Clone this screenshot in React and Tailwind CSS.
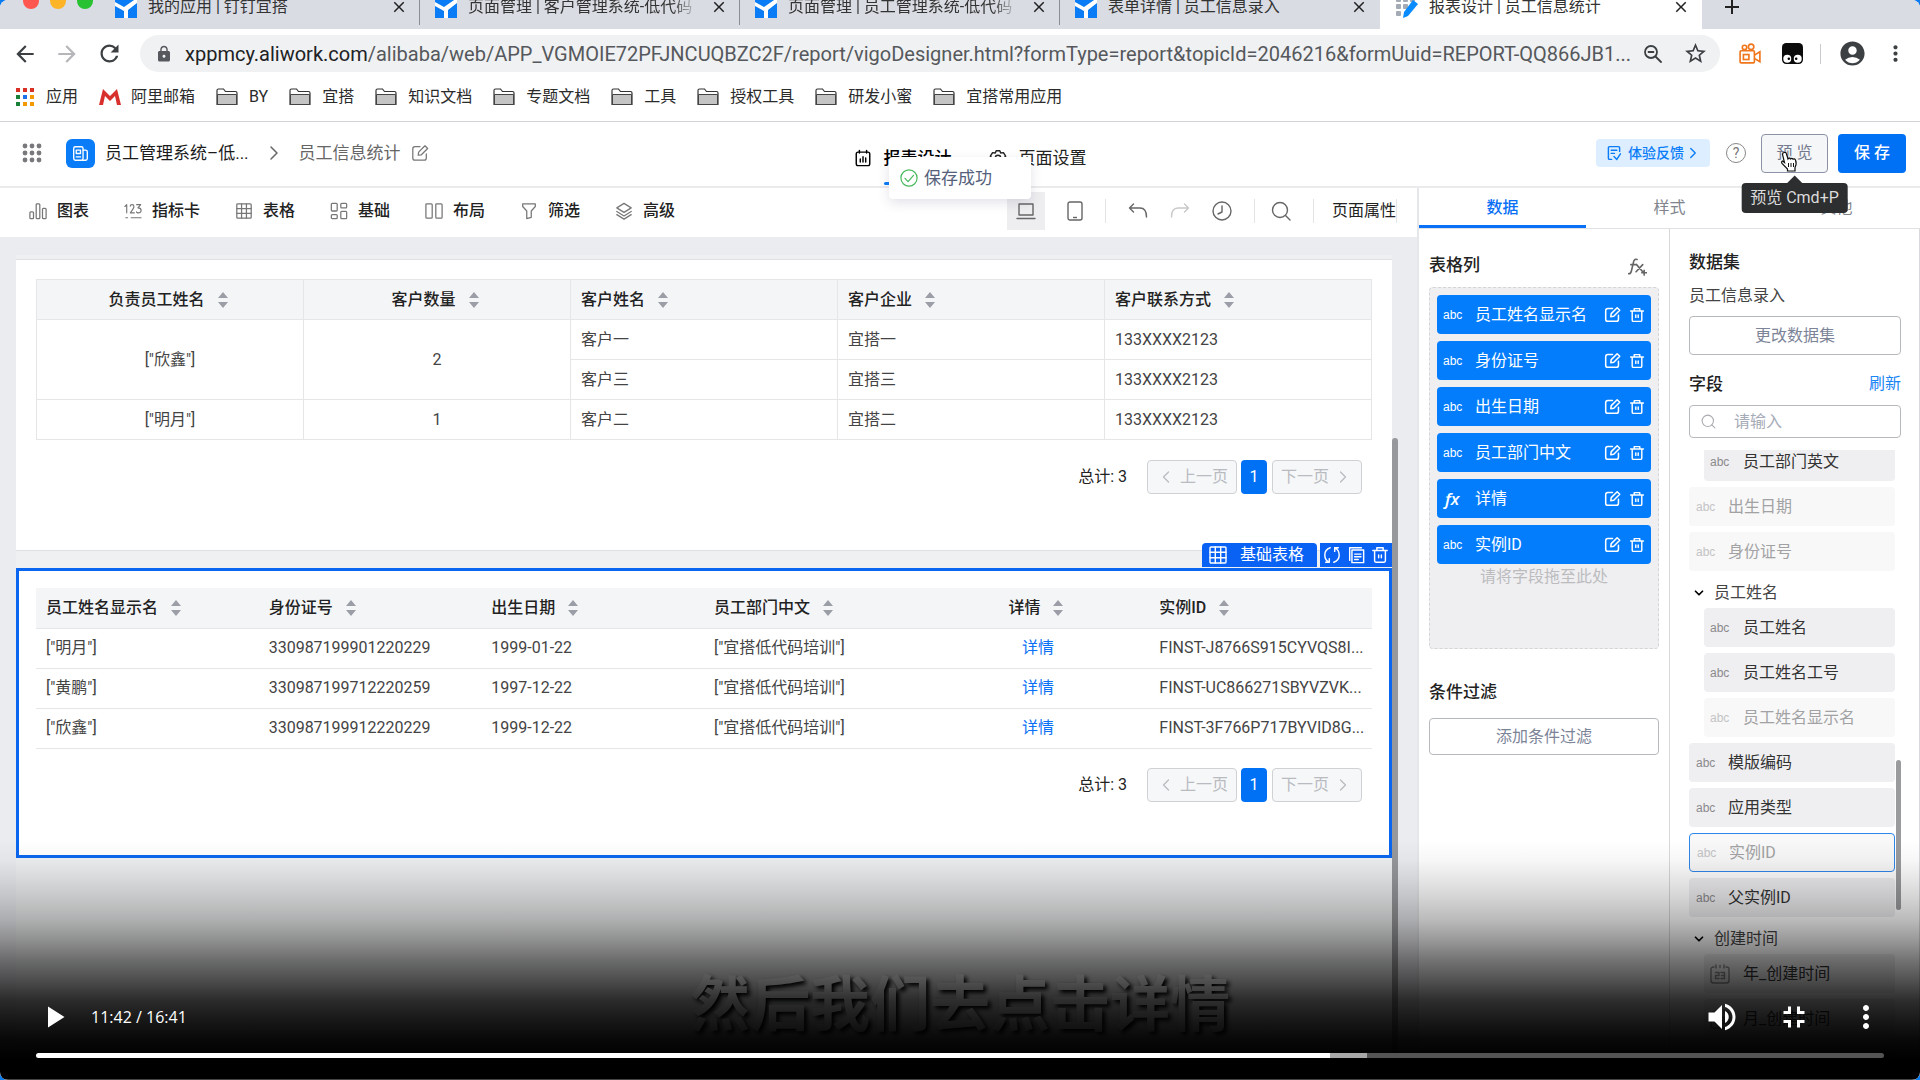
import React from 'react';
import {
  MdAccountCircle,
  MdAdd,
  MdArrowBack,
  MdArrowForward,
  MdClose,
  MdFullscreenExit,
  MdLock,
  MdMoreVert,
  MdPlayArrow,
  MdRefresh,
  MdStarBorder,
  MdVolumeUp,
} from 'react-icons/md';
import { ChevronDown, ChevronLeft, ChevronRight, Search } from 'lucide-react';

const browserTabs = [
  { title: '我的应用 | 钉钉宜搭' },
  { title: '页面管理 | 客户管理系统-低代码', fade: true },
  { title: '页面管理 | 员工管理系统-低代码', fade: true },
  { title: '表单详情 | 员工信息录入', last: true },
  { title: '报表设计 | 员工信息统计', active: true },
];

const bookmarks = ['BY', '宜搭', '知识文档', '专题文档', '工具', '授权工具', '研发小蜜', '宜搭常用应用'];

const customerRows = [
  { owner: '["欣鑫"]', count: 2, span: 2, name: '客户一', company: '宜搭一', phone: '133XXXX2123' },
  { name: '客户三', company: '宜搭三', phone: '133XXXX2123' },
  { owner: '["明月"]', count: 1, span: 1, name: '客户二', company: '宜搭二', phone: '133XXXX2123' },
];

const staffRows = [
  { name: '["明月"]', idCard: '330987199901220229', birth: '1999-01-22', dept: '["宜搭低代码培训"]', inst: 'FINST-J8766S915CYVQS8I...' },
  { name: '["黄鹏"]', idCard: '330987199712220259', birth: '1997-12-22', dept: '["宜搭低代码培训"]', inst: 'FINST-UC866271SBYVZVK...' },
  { name: '["欣鑫"]', idCard: '330987199912220229', birth: '1999-12-22', dept: '["宜搭低代码培训"]', inst: 'FINST-3F766P717BYVID8G...' },
];

const tableColumns = [
  { label: '员工姓名显示名' },
  { label: '身份证号' },
  { label: '出生日期' },
  { label: '员工部门中文' },
  { label: '详情', formula: true },
  { label: '实例ID' },
];

const fields = [
  { label: '员工部门英文', nested: true },
  { label: '出生日期', used: true },
  { label: '身份证号', used: true },
  { label: '员工姓名', group: true },
  { label: '员工姓名', nested: true },
  { label: '员工姓名工号', nested: true },
  { label: '员工姓名显示名', nested: true, used: true },
  { label: '模版编码' },
  { label: '应用类型' },
  { label: '实例ID', used: true, selected: true },
  { label: '父实例ID' },
  { label: '创建时间', group: true },
  { label: '年_创建时间', nested: true, date: true },
  { label: '月_创建时间', nested: true, date: true },
  { label: '日_创建时间', nested: true, date: true },
];

/* ---------- icons ---------- */

const Icon = ({ size = 'size-[18px]', children, w = 1.4, className = '' }) => (
  <svg
    viewBox="0 0 20 20"
    className={`${size} shrink-0 ${className}`}
    fill="none"
    stroke="currentColor"
    strokeWidth={w}
    strokeLinecap="round"
    strokeLinejoin="round"
    aria-hidden="true"
  >
    {children}
  </svg>
);

const YidaLogo = () => (
  <svg viewBox="0 0 22 22" className="size-[22px] shrink-0" aria-hidden="true">
    <path fill="#0a7cf5" d="M0 0h22v22H0z" />
    <path fill="#fff" d="M0 6l9 5 13-9v5l-9 7v8H9v-7L0 10z" />
  </svg>
);

const ReportLogo = () => (
  <svg viewBox="0 0 22 22" className="size-[22px] shrink-0" aria-hidden="true">
    <g fill="#a5abb5">
      <rect x="0" y="1" width="5" height="5" rx="1" />
      <rect x="7" y="1" width="5" height="5" rx="1" />
      <rect x="14" y="1" width="5" height="5" rx="1" />
      <rect x="0" y="8" width="5" height="5" rx="1" />
      <rect x="7" y="8" width="5" height="5" rx="1" />
      <rect x="0" y="15" width="5" height="5" rx="1" />
    </g>
    <path fill="#0a8cff" d="M17 4l5 4-10 12-5 2 1-6z" />
  </svg>
);

const FolderIcon = () => (
  <svg viewBox="0 0 22 18" className="h-[18px] w-[22px] shrink-0" aria-hidden="true">
    <path d="M1 16.5V2.5q0-1.5 1.500-1.500h5l2 2.500h10q1.500 0 1.500 1.500v11.500z" fill="#fff" stroke="#333" strokeWidth="1.200" />
    <path d="M1.500 6.500h19v10h-19z" fill="#c4c4c4" stroke="#444" strokeWidth="1" />
  </svg>
);

const AppsIcon = () => {
  const colors = ['#d93025', '#d93025', '#d93025', '#188038', '#1a73e8', '#f29900', '#188038', '#f29900', '#f29900'];
  return (
    <svg viewBox="0 0 18 18" className="size-[18px] shrink-0" aria-hidden="true">
      {colors.map((c, i) => (
        <rect key={i} x={(i % 3) * 7} y={Math.floor(i / 3) * 7} width="4" height="4" fill={c} />
      ))}
    </svg>
  );
};

const GridDots = () => (
  <svg viewBox="0 0 20 20" className="size-5 shrink-0 fill-[#77797c]" aria-hidden="true">
    {[3, 10, 17].map((y) => [3, 10, 17].map((x) => <circle key={`${x}-${y}`} cx={x} cy={y} r="2.400" />))}
  </svg>
);

const EditIcon = ({ size, w = 1.6 }) => (
  <Icon size={size} w={w}>
    <path d="M10 3H4.500A2.500 2.500 0 002 5.500v10A2.500 2.500 0 004.500 18h10a2.500 2.500 0 002.500-2.500V11" />
    <path d="M8 12.500l.5-3.500L15.500 2l3 3-7 7z" />
  </Icon>
);

const TrashIcon = ({ size, w = 1.6 }) => (
  <Icon size={size} w={w}>
    <path d="M2 5h16M6.500 5V2h7v3M4 5v11.500q0 1.500 1.500 1.500h9q1.500 0 1.500-1.500V5M8.500 10v3M11.500 10v3" />
  </Icon>
);

const TableIcon = ({ size }) => (
  <Icon size={size}>
    <rect x="2" y="2" width="16" height="16" rx="1" />
    <path d="M2 7.300h16M2 12.700h16M7.300 2v16M12.700 2v16" />
  </Icon>
);

const SortIcon = () => (
  <svg viewBox="0 0 10 16" className="h-4 w-2.5 shrink-0 fill-[#9b9ea6]" aria-hidden="true">
    <path d="M5 0l5 6H0zM5 16l5-6H0z" />
  </svg>
);

const CalendarIcon = () => (
  <Icon size="size-5" w={1.4}>
    <path d="M4 3H3.500Q1 3 1 5.500v11Q1 19 3.500 19h13q2.500 0 2.500-2.500v-11Q19 3 16.500 3H16M6 1v3M10 1.500v2M14 1v3" />
    <path d="M5.500 8.500h3.500v3H5.500v3H9M11 8.500h3.500v6H11M11.500 11.500h3" />
  </Icon>
);

const tools = [
  {
    label: '图表',
    icon: (
      <Icon>
        <rect x="1" y="11" width="4" height="7.500" rx="1" />
        <rect x="8" y="2" width="4" height="16.500" rx="1" />
        <rect x="15" y="7" width="4" height="11.500" rx="1" />
      </Icon>
    ),
  },
  {
    label: '指标卡',
    icon: (
      <Icon w={1.3}>
        <path d="M1 5l2-2v9M7 4.500q0-1.500 2-1.500t2 2-4 7h4.500M14 3h4.500l-3 3.500q3.500 0 3.500 2.700T16.500 12 14 11M2 17.500h2M8 17.500h11" />
      </Icon>
    ),
  },
  { label: '表格', icon: <TableIcon /> },
  {
    label: '基础',
    icon: (
      <Icon>
        <rect x="1.500" y="1.500" width="6.500" height="8.500" rx="1" />
        <rect x="12" y="1.500" width="6.500" height="5" rx="1" />
        <rect x="1.500" y="14" width="6.500" height="4.500" rx="1" />
        <rect x="12" y="10.500" width="6.500" height="8" rx="1" />
      </Icon>
    ),
  },
  {
    label: '布局',
    icon: (
      <Icon>
        <rect x="1" y="2" width="7" height="16" rx="1" />
        <rect x="12" y="2" width="7" height="16" rx="1" />
      </Icon>
    ),
  },
  {
    label: '筛选',
    icon: (
      <Icon>
        <path d="M3 2h14v3l-4.500 5v7l-5 1.500V10L3 5z" />
      </Icon>
    ),
  },
  {
    label: '高级',
    icon: (
      <Icon>
        <path d="M10 1.500L18 6.500 10 11.500 2 6.500zM2 10.500l8 5 8-5M2 14l8 5 8-5" />
      </Icon>
    ),
  },
];

/* ---------- browser chrome ---------- */

const TabStrip = () => (
  <div className="flex h-[29px] flex-col justify-end overflow-hidden bg-[#d9dce3]">
    <div className="flex h-11 shrink-0 items-stretch text-base text-[#333]">
      <div className="flex w-[100px] shrink-0 items-center gap-[11px] pb-3 pl-[23px]">
        <span className="size-4 rounded-full bg-[#ff5650]" />
        <span className="size-4 rounded-full bg-[#fdb427]" />
        <span className="size-4 rounded-full bg-[#28c131]" />
      </div>
      {browserTabs.map((tab) => (
        <div
          key={tab.title}
          className={
            tab.active
              ? 'flex w-[322px] items-center gap-[11px] rounded-t-lg bg-white pr-3 pl-4'
              : 'flex w-[320px] items-center gap-[11px] pl-[15px]'
          }
        >
          {tab.active ? <ReportLogo /> : <YidaLogo />}
          <span
            className={`flex-1 overflow-hidden leading-6 whitespace-nowrap ${
              tab.fade ? '[mask-image:linear-gradient(to_right,black_88%,transparent)]' : ''
            }`}
          >
            {tab.title}
          </span>
          <MdClose className="size-[18px] shrink-0 text-[#222]" />
          {!tab.active && <span className={tab.last ? 'h-9 w-px' : 'h-9 w-px bg-[#8b8e95]'} />}
        </div>
      ))}
      <button type="button" aria-label="新标签页" className="ml-[18px]">
        <MdAdd className="size-6 text-[#222]" />
      </button>
    </div>
  </div>
);

const AddressBar = () => (
  <div className="flex h-[49px] items-center bg-white px-3 text-[#3c4043]">
    <button type="button" aria-label="后退"><MdArrowBack className="size-[26px]" /></button>
    <button type="button" aria-label="前进" className="ml-4"><MdArrowForward className="size-[26px] text-[#b4b6b9]" /></button>
    <button type="button" aria-label="刷新页面" className="mr-[17px] ml-4"><MdRefresh className="size-[27px]" /></button>
    <div className="flex h-[37px] flex-1 items-center rounded-full bg-[#f0f1f2] pr-3 pl-[15px]">
      <MdLock className="size-[18px] shrink-0 text-[#55585c]" />
      <span className="ml-3 flex-1 truncate text-xl leading-6 text-[#55585c]">
        <span className="text-[#202124]">xppmcy.aliwork.com</span>
        /alibaba/web/APP_VGMOIE72PFJNCUQBZC2F/report/vigoDesigner.html?formType=report&amp;topicId=2046216&amp;formUuid=REPORT-QQ866JB1...
      </span>
      <Icon size="size-5" w={1.8} className="mr-5">
        <circle cx="8" cy="8" r="6" />
        <path d="M12.500 12.500L18 18M5.500 8h5" />
      </Icon>
      <MdStarBorder className="size-[25px] shrink-0" />
    </div>
    <svg viewBox="0 0 20 20" className="ml-[19px] size-[22px] shrink-0 fill-none stroke-[#f0761c]" strokeWidth="1.500" aria-hidden="true">
      <circle cx="5" cy="4" r="2" />
      <circle cx="11" cy="3.500" r="2.500" />
      <rect x="1" y="7" width="13" height="11" rx="1" />
      <rect x="4" y="10.500" width="5" height="4.500" />
      <path d="M14 11l5-3v9l-5-3" />
    </svg>
    <svg viewBox="0 0 20 20" className="ml-[21px] size-[21px] shrink-0" aria-hidden="true">
      <rect width="20" height="20" rx="4" fill="#0b0b0b" />
      <circle cx="5" cy="15" r="3.800" fill="#fff" />
      <circle cx="15" cy="15" r="3.800" fill="#fff" />
      <circle cx="6.500" cy="15" r="1.200" />
      <circle cx="13.500" cy="15" r="1.200" />
    </svg>
    <span className="mx-[17px] h-5 w-px bg-[#c8cacd]" />
    <MdAccountCircle className="size-[29px]" />
    <button type="button" aria-label="更多" className="ml-4"><MdMoreVert className="size-[25px]" /></button>
  </div>
);

const BookmarkBar = () => (
  <div className="flex h-11 items-center gap-[21px] border-b border-[#d0d2d5] bg-white pb-[5px] pl-4 text-base leading-6 text-[#2b2b2b]">
    <a href="#apps" className="flex items-center gap-3">
      <AppsIcon />
      应用
    </a>
    <a href="#mail" className="flex items-center gap-2.5">
      <svg viewBox="0 0 22 16" className="h-4 w-[22px]" aria-hidden="true">
        <path d="M0 16L4 0l7 7 7-7 4 16h-4L16 7l-5 5-5-5-2 9z" fill="#d8302c" />
      </svg>
      阿里邮箱
    </a>
    {bookmarks.map((label) => (
      <a key={label} href="#folder" className="flex items-center gap-[11px]">
        <FolderIcon />
        {label}
      </a>
    ))}
  </div>
);

/* ---------- designer ---------- */

const DesignerHeader = () => (
  <header className="flex h-[66px] items-center border-b-2 border-[#ebebed] bg-white pr-3.5 pb-0.5 pl-[22px] text-[17px] leading-6">
    <div className="flex flex-1 items-center">
      <GridDots />
      <span className="ml-6 flex size-[29px] items-center justify-center rounded-md bg-[#0a7cf7] text-white">
        <Icon size="size-[17px]" w={1.6}>
          <rect x="2" y="2" width="11" height="16" rx="2" />
          <path d="M13 6h3q2 0 2 2v8q0 2-2 2h-4M5 6h5v4H5zM5 14h5" />
        </Icon>
      </span>
      <span className="ml-2.5 text-[#1b1b1b]">员工管理系统–低...</span>
      <ChevronRight className="mx-[13px] size-6 text-[#666]" strokeWidth={1.5} />
      <span className="mr-2.5 text-[#666]">员工信息统计</span>
      <button type="button" aria-label="重命名" className="text-[#777]"><EditIcon size="size-[18px]" w={1.4} /></button>
    </div>

    <nav className="mt-2.5 flex items-center gap-[37px] pl-3 text-[#222]">
      <a href="#design" className="relative flex items-center gap-3 font-medium text-black">
        <Icon w={1.6}>
          <path d="M5 3.500H4.500q-2 0-2 2V16q0 2.500 2 2.500h11q2 0 2-2.500V5.500q0-2-2-2H7M6 1.500v3M14 1.500v3M7 11v3.500M10 8.500v6M13 10v4.500" />
        </Icon>
        报表设计
        <span className="absolute right-0 -bottom-[15px] left-[30px] h-[3px] rounded-full bg-[#0a7cf7]" />
      </a>
      <a href="#settings" className="flex items-center gap-3">
        <Icon w={1.6}>
          <path d="M8 2h4l1 2.500 3-.5 2.500 4-2 2 2 2-2.500 4-3-.5-1 2.500H8l-1-2.500-3 .5-2.500-4 2-2-2-2L4 4l3 .5z" />
          <circle cx="10" cy="10" r="3" />
        </Icon>
        页面设置
      </a>
    </nav>

    <div className="flex flex-1 items-center justify-end">
      <a href="#feedback" className="flex h-7 items-center rounded bg-[#dceeff] pr-2 pl-2.5 text-sm font-medium text-[#0a7cf7]">
        <Icon size="size-4" w={1.8} className="mr-1.5">
          <path d="M17 8V3.500Q17 2 15.500 2h-11Q3 2 3 3.500v13Q3 18 4.500 18H7M6.500 6.500h7M6.500 10.500h4M10 14.500l3.500 3.500L18 11" />
        </Icon>
        体验反馈
        <ChevronRight className="size-[18px]" strokeWidth={1.8} />
      </a>
      <button type="button" aria-label="帮助" className="mr-[15px] ml-4 flex size-5 items-center justify-center rounded-full border border-[#888] text-sm leading-4 text-[#777]">
        ?
      </button>
      <div className="relative mr-2.5">
        <button type="button" className="h-[39px] w-[67px] rounded border border-[#8d93a5] bg-[#f5f6f8] text-base text-[#737a8e]">
          预 览
        </button>
        <svg viewBox="0 0 20 22" className="absolute top-[17px] left-[18px] h-[22px] w-5" aria-hidden="true">
          <path
            d="M5 1.500q2-.6 2.500 1.500l1.500 5q1-1.500 2.500 0 1.200-1.300 2.500.2 1.500-1 2.500.8 1.500 4-.5 7.500v3.500H8.500v-2L3 12.500q-1-2 .5-2.500l2 1.500L3.500 3.500Q3.500 2 5 1.500z"
            fill="#fff"
            stroke="#111"
            strokeWidth="1.200"
          />
          <path d="M9.500 12v4M12 12v4M14.500 12v4" stroke="#111" />
        </svg>
        <div role="tooltip" className="absolute top-[49px] left-1/2 z-20 h-[30px] -translate-x-1/2 rounded-sm bg-[#2d2e30] px-[9px] text-base leading-[29px] whitespace-nowrap text-[#dcdcdc]">
          <span className="absolute -top-[5px] left-1/2 size-3 -translate-x-1/2 rotate-45 bg-[#2d2e30]" />
          <span className="relative">预览 Cmd+P</span>
        </div>
      </div>
      <button type="button" className="h-[39px] w-[68px] rounded bg-[#0070f5] text-base font-medium text-white">
        保 存
      </button>
    </div>
  </header>
);

const Toolbar = () => (
  <div className="flex h-[49px] shrink-0 items-center justify-between bg-white pr-5 pb-[3px] pl-[29px] text-base leading-6 text-[#222]">
    <div className="flex gap-[35px]">
      {tools.map((tool) => (
        <button key={tool.label} type="button" className="flex items-center gap-2.5 font-medium">
          <span className="text-[#777]">{tool.icon}</span>
          {tool.label}
        </button>
      ))}
    </div>
    <div className="flex items-center gap-4">
      <div className="flex items-center gap-[22px] pr-1.5 text-[#666]">
        <button type="button" aria-label="桌面端" className="flex h-[38px] w-[38px] items-center justify-center bg-[#eeeef0]">
          <Icon size="size-5"><path d="M3 3h14v11H3zM1 17.500h18" /></Icon>
        </button>
        <button type="button" aria-label="移动端">
          <svg viewBox="0 0 16 20" className="h-5 w-4 fill-none stroke-current" strokeWidth="1.400" aria-hidden="true">
            <rect x="1" y="1" width="14" height="18" rx="2" />
            <path d="M6 16.500h4" />
          </svg>
        </button>
        <span className="h-6 w-px bg-[#e4e4e6]" />
        <button type="button" aria-label="撤销">
          <Icon size="size-5"><path d="M5.500 3L1.500 7l4 4M1.500 7H12q6.500 0 6.500 9" /></Icon>
        </button>
        <button type="button" aria-label="重做" className="text-[#c9c9cb]">
          <Icon size="size-5"><path d="M14.500 3l4 4-4 4M18.500 7H8Q1.500 7 1.500 16" /></Icon>
        </button>
        <button type="button" aria-label="历史">
          <Icon size="size-5"><circle cx="10" cy="10" r="9" /><path d="M10 5v6l-4 2" /></Icon>
        </button>
      </div>
      <span className="h-6 w-px bg-[#e4e4e6]" />
      <button type="button" aria-label="搜索" className="mr-1.5">
        <Icon size="size-5" className="text-[#666]"><circle cx="9" cy="9" r="7.500" /><path d="M14.500 14.500L19 19" /></Icon>
      </button>
      <button type="button" className="h-6 border-x border-[#e4e4e6] pl-[18px]">页面属性</button>
    </div>
  </div>
);

const HeadLabel = ({ children, center }) => (
  <span className={center ? 'flex items-center justify-center gap-[13px] pr-1' : 'flex items-center gap-[13px]'}>
    {children}
    <SortIcon />
  </span>
);

const Pagination = () => (
  <div className="flex items-center justify-end pr-2.5 text-base leading-6">
    <span className="mr-5 text-[#222]">总计: 3</span>
    <button type="button" disabled className="flex h-[34px] w-[90px] items-center justify-center gap-1 rounded border border-[#cfd1d5] bg-[#f6f7f8] text-[#b9bbc1]">
      <ChevronLeft className="size-5" strokeWidth={1.5} />
      上一页
    </button>
    <button type="button" className="mr-[5px] ml-1 h-[34px] w-[26px] rounded bg-[#0070f5] text-white">1</button>
    <button type="button" disabled className="flex h-[34px] w-[90px] items-center justify-center gap-1 rounded border border-[#cfd1d5] bg-[#f6f7f8] text-[#b9bbc1]">
      下一页
      <ChevronRight className="size-5" strokeWidth={1.5} />
    </button>
  </div>
);

const CustomerTable = () => (
  <section className="border-t border-b border-[#dfe0e3] bg-white px-5 pt-[19px] pb-14">
    <table className="mb-5 w-full table-fixed border-collapse text-base leading-6 text-[#444] [&_td]:h-10 [&_td]:border [&_td]:border-[#e4e6e8] [&_td]:px-2.5 [&_th]:h-10 [&_th]:border [&_th]:border-[#e4e6e8] [&_th]:px-2.5">
      <thead className="bg-[#f4f5f7] text-[#222]">
        <tr>
          <th className="font-medium"><HeadLabel center>负责员工姓名</HeadLabel></th>
          <th className="font-medium"><HeadLabel center>客户数量</HeadLabel></th>
          <th className="font-medium"><HeadLabel>客户姓名</HeadLabel></th>
          <th className="font-medium"><HeadLabel>客户企业</HeadLabel></th>
          <th className="font-medium"><HeadLabel>客户联系方式</HeadLabel></th>
        </tr>
      </thead>
      <tbody>
        {customerRows.map((row) => (
          <tr key={row.name}>
            {row.owner && <td rowSpan={row.span} className="text-center">{row.owner}</td>}
            {row.owner && <td rowSpan={row.span} className="text-center">{row.count}</td>}
            <td>{row.name}</td>
            <td>{row.company}</td>
            <td>{row.phone}</td>
          </tr>
        ))}
      </tbody>
    </table>
    <Pagination />
  </section>
);

const StaffTable = () => (
  <section className="relative mt-[17px] border-[3px] border-[#0a66f0] bg-white px-[17px] pt-[17px] pb-[53px]">
    {/* handle of the selected component */}
    <div className="absolute -top-7 -right-[3px] flex gap-[3px] text-base leading-6 text-white">
      <span className="flex h-6 w-[115px] items-center gap-3 rounded-t-sm bg-[#0a62f5] pl-1.5">
        <TableIcon size="size-5" />
        基础表格
      </span>
      <span className="flex h-6 items-center gap-1.5 bg-[#0a62f5] px-[3px]">
        <button type="button" aria-label="切换">
          <Icon size="size-[18px]" w={1.6}><path d="M8 2Q2 4 2 10t5 8M3 18h4v-4M12 18q6-2 6-8t-5-8M17 2h-4v4" /></Icon>
        </button>
        <button type="button" aria-label="复制">
          <Icon size="size-[18px]" w={1.6}><path d="M3 16V2h13M5.500 4.500h13v14h-13zM8.500 9h7M8.500 12h7M8.500 15h4" /></Icon>
        </button>
        <button type="button" aria-label="删除"><TrashIcon size="size-[18px]" /></button>
      </span>
    </div>
    <table className="mb-[19px] w-full table-fixed border-collapse text-base leading-6 text-[#444] [&_td]:px-2.5 [&_th]:px-2.5 [&_tr]:h-10 [&_tr]:border-b [&_tr]:border-[#e4e6e8]">
      <thead className="bg-[#f4f5f7] text-[#222]">
        <tr>
          <th className="font-medium"><HeadLabel>员工姓名显示名</HeadLabel></th>
          <th className="font-medium"><HeadLabel>身份证号</HeadLabel></th>
          <th className="font-medium"><HeadLabel>出生日期</HeadLabel></th>
          <th className="font-medium"><HeadLabel>员工部门中文</HeadLabel></th>
          <th className="font-medium"><HeadLabel center>详情</HeadLabel></th>
          <th className="font-medium"><HeadLabel>实例ID</HeadLabel></th>
        </tr>
      </thead>
      <tbody>
        {staffRows.map((row) => (
          <tr key={row.idCard}>
            <td>{row.name}</td>
            <td>{row.idCard}</td>
            <td>{row.birth}</td>
            <td>{row.dept}</td>
            <td className="text-center"><a href="#detail" className="text-[#0a70f5]">详情</a></td>
            <td className="whitespace-nowrap">{row.inst}</td>
          </tr>
        ))}
      </tbody>
    </table>
    <Pagination />
  </section>
);

const Canvas = () => (
  <main className="relative flex-1 overflow-hidden bg-[#ebecf0] pt-[18px] pr-[25px] pl-4">
    <div className="min-h-full bg-[#eff0f1] pt-1">
      <CustomerTable />
      <StaffTable />
    </div>
    <span className="absolute top-[201px] right-[19px] bottom-0 w-1.5 rounded-t-full bg-[#97989b]" />
  </main>
);

const ColumnPanel = () => (
  <div className="w-[251px] shrink-0 border-r border-[#d8d9dc] px-2.5">
    <div className="mt-[23px] flex items-center justify-between pr-3">
      <h3 className="text-[17px] leading-6 font-medium">表格列</h3>
      <button type="button" aria-label="添加公式" className="mt-1.5 text-[#666]">
        <Icon size="size-[19px]" w={1.7}>
          <path d="M9.500 1.500q-2.500-1-3.500 2L3.500 14q-.7 3-3 2.500M3 7h6M9 7l6.500 7.500M15.500 7L8.500 14.500M17 13v5M14.500 15.500h5" />
        </Icon>
      </button>
    </div>
    <div className="mt-2.5 flex h-[362px] flex-col gap-[7px] rounded border border-dashed border-[#d5d5d7] bg-[#efeff1] p-[7px]">
      {tableColumns.map((col) => (
        <div key={col.label} className="flex h-[39px] shrink-0 items-center rounded bg-[#037dfc] pr-1.5 pl-1.5 text-white">
          {col.formula ? (
            <span className="w-8 pl-0.5 font-['Open_Sans',sans-serif] text-[17px] leading-5 font-semibold italic">fx</span>
          ) : (
            <span className="w-8 font-['Liberation_Sans',sans-serif] text-xs leading-5">abc</span>
          )}
          <span className="flex-1 text-base leading-6">{col.label}</span>
          <button type="button" aria-label={`编辑${col.label}`} className="mr-2"><EditIcon size="size-[17px]" w={1.8} /></button>
          <button type="button" aria-label={`删除${col.label}`}><TrashIcon size="size-4" w={1.8} /></button>
        </div>
      ))}
      <p className="-mt-1.5 text-center text-base leading-6 text-[#bcbcbf]">请将字段拖至此处</p>
    </div>
    <h3 className="mt-[31px] text-[17px] leading-6 font-medium">条件过滤</h3>
    <button type="button" className="mt-3.5 h-[37px] w-full rounded border border-[#b5b8bd] text-base leading-6 text-[#7c8498]">
      添加条件过滤
    </button>
  </div>
);

const FieldItem = ({ field }) => {
  if (field.group) {
    return (
      <div className="flex h-[31px] items-center gap-2 pl-[3px] text-base leading-6 text-[#444]">
        <ChevronDown className="size-[14px] text-black" strokeWidth={3} />
        {field.label}
      </div>
    );
  }
  return (
    <div
      className={`mb-1.5 flex h-[39px] items-center rounded text-base leading-6 ${field.nested ? 'ml-[15px] pl-1.5' : 'pl-[7px]'} ${
        field.used ? 'bg-[#f8f8f8] text-[#a2a2a4]' : 'bg-[#efeff1] text-[#333]'
      } ${field.selected ? 'border border-[#2f86ea]' : ''}`}
    >
      <span className={`w-8 font-['Liberation_Sans',sans-serif] text-xs ${field.used ? 'text-[#c4c4c6]' : 'text-[#8a8a8c]'} ${field.nested ? 'mr-px' : ''}`}>
        {field.date ? <CalendarIcon /> : 'abc'}
      </span>
      {field.label}
    </div>
  );
};

const FieldPanel = () => (
  <div className="flex flex-1 flex-col border-r border-[#d8d9dc] pr-[18px] pl-[19px]">
    <h3 className="mt-[21px] text-[17px] leading-6 font-medium">数据集</h3>
    <p className="mt-2.5 text-base leading-6 text-[#444]">员工信息录入</p>
    <button type="button" className="mt-2 h-[39px] w-full shrink-0 rounded border border-[#b5b8bd] text-base leading-6 text-[#7c8498]">
      更改数据集
    </button>
    <div className="mt-[17px] flex items-center justify-between leading-6">
      <h3 className="text-[17px] font-medium">字段</h3>
      <button type="button" className="text-base text-[#1a86f5]">刷新</button>
    </div>
    <label className="mt-[9px] flex h-[33px] shrink-0 items-center rounded border border-[#b5b8bd] pl-2.5">
      <Search className="size-[17px] shrink-0 text-[#a9abb0]" strokeWidth={1.5} aria-label="搜索字段" />
      <input type="text" placeholder="请输入" className="ml-[17px] w-full min-w-0 text-base leading-6 outline-none placeholder:text-[#a6abb8]" />
    </label>
    <div className="relative mt-3 flex-1 overflow-hidden pr-1.5">
      <div className="-mt-2">
        {fields.map((field, i) => (
          <FieldItem key={i} field={field} />
        ))}
      </div>
      <span className="absolute top-[310px] right-0 h-[150px] w-[5px] rounded-full bg-[#9a9b9d]" />
    </div>
  </div>
);

const SidePanel = () => (
  <aside className="flex w-[503px] shrink-0 flex-col border-l-2 border-[#e6e7ea] bg-white text-[#222]">
    <div role="tablist" className="grid h-[41px] shrink-0 grid-cols-3 border-b border-[#e0e1e4] text-base leading-6 text-[#80848d]">
      <button type="button" role="tab" className="border-b-[3px] border-[#0a70f5] pt-0.5 font-medium text-[#0a70f5]">数据</button>
      <button type="button" role="tab">样式</button>
      <button type="button" role="tab">其他</button>
    </div>
    <div className="flex min-h-0 flex-1">
      <ColumnPanel />
      <FieldPanel />
    </div>
  </aside>
);

const Toast = () => (
  <div role="status" className="absolute top-[157px] left-1/2 z-10 flex h-[42px] w-[142px] -translate-x-1/2 items-center rounded bg-white pl-[11px] text-[17px] leading-6 text-[#55607a] shadow-[0_4px_12px_rgba(60,70,100,0.15)]">
    <Icon size="size-[18px]" w={1.3} className="mr-1.5 text-[#46b85c]">
      <circle cx="10" cy="10" r="9" />
      <path d="M5.500 10.500l3.500 3.500 6-7" />
    </Icon>
    保存成功
  </div>
);

/* ---------- video player ---------- */

const PlayerControls = () => (
  <div className="absolute inset-x-0 bottom-0 z-30 flex h-60 flex-col justify-end border-b border-[#444] bg-[linear-gradient(to_bottom,transparent_0px,rgba(0,0,0,0.03)_20px,rgba(0,0,0,0.1)_40px,rgba(0,0,0,0.18)_60px,rgba(0,0,0,0.27)_80px,rgba(0,0,0,0.4)_100px,rgba(0,0,0,0.55)_120px,rgba(0,0,0,0.68)_140px,rgba(0,0,0,0.82)_160px,rgba(0,0,0,0.9)_180px,rgba(0,0,0,0.97)_200px,black_220px)] px-9 pb-[21px] text-white">
    <div className="flex items-center gap-9">
      <button type="button" aria-label="播放"><MdPlayArrow className="size-9" /></button>
      <span className="-ml-[17px] flex-1 font-['Open_Sans',sans-serif] text-base leading-6">11:42 / 16:41</span>
      <button type="button" aria-label="音量"><MdVolumeUp className="size-9" /></button>
      <button type="button" aria-label="退出全屏"><MdFullscreenExit className="size-9" /></button>
      <button type="button" aria-label="更多选项"><MdMoreVert className="size-9" /></button>
    </div>
    <input
      type="range"
      aria-label="播放进度"
      min="0"
      max="1001"
      defaultValue="702"
      className="mt-[18px] h-[5px] w-full appearance-none rounded-full bg-[linear-gradient(to_right,white_70%,#a8a8a8_70%,#a8a8a8_72%,#545454_72%)] [&::-webkit-slider-thumb]:size-0 [&::-webkit-slider-thumb]:appearance-none"
    />
  </div>
);

export default function App() {
  return (
    <div className="h-screen bg-[#0a7cf0] font-['Roboto','Noto_Sans_CJK_SC',sans-serif]">
      <div className="relative flex h-full flex-col overflow-hidden rounded-lg bg-white">
        <TabStrip />
        <AddressBar />
        <BookmarkBar />
        <DesignerHeader />
        <div className="flex min-h-0 flex-1">
          <div className="flex min-w-0 flex-1 flex-col">
            <Toolbar />
            <Canvas />
          </div>
          <SidePanel />
        </div>
        <Toast />
        <p className="absolute inset-x-0 bottom-[34px] z-20 text-center text-[60px] leading-[80px] font-bold text-white [text-shadow:3px_3px_4px_black]">
          然后我们去点击详情
        </p>
        <PlayerControls />
      </div>
    </div>
  );
}
